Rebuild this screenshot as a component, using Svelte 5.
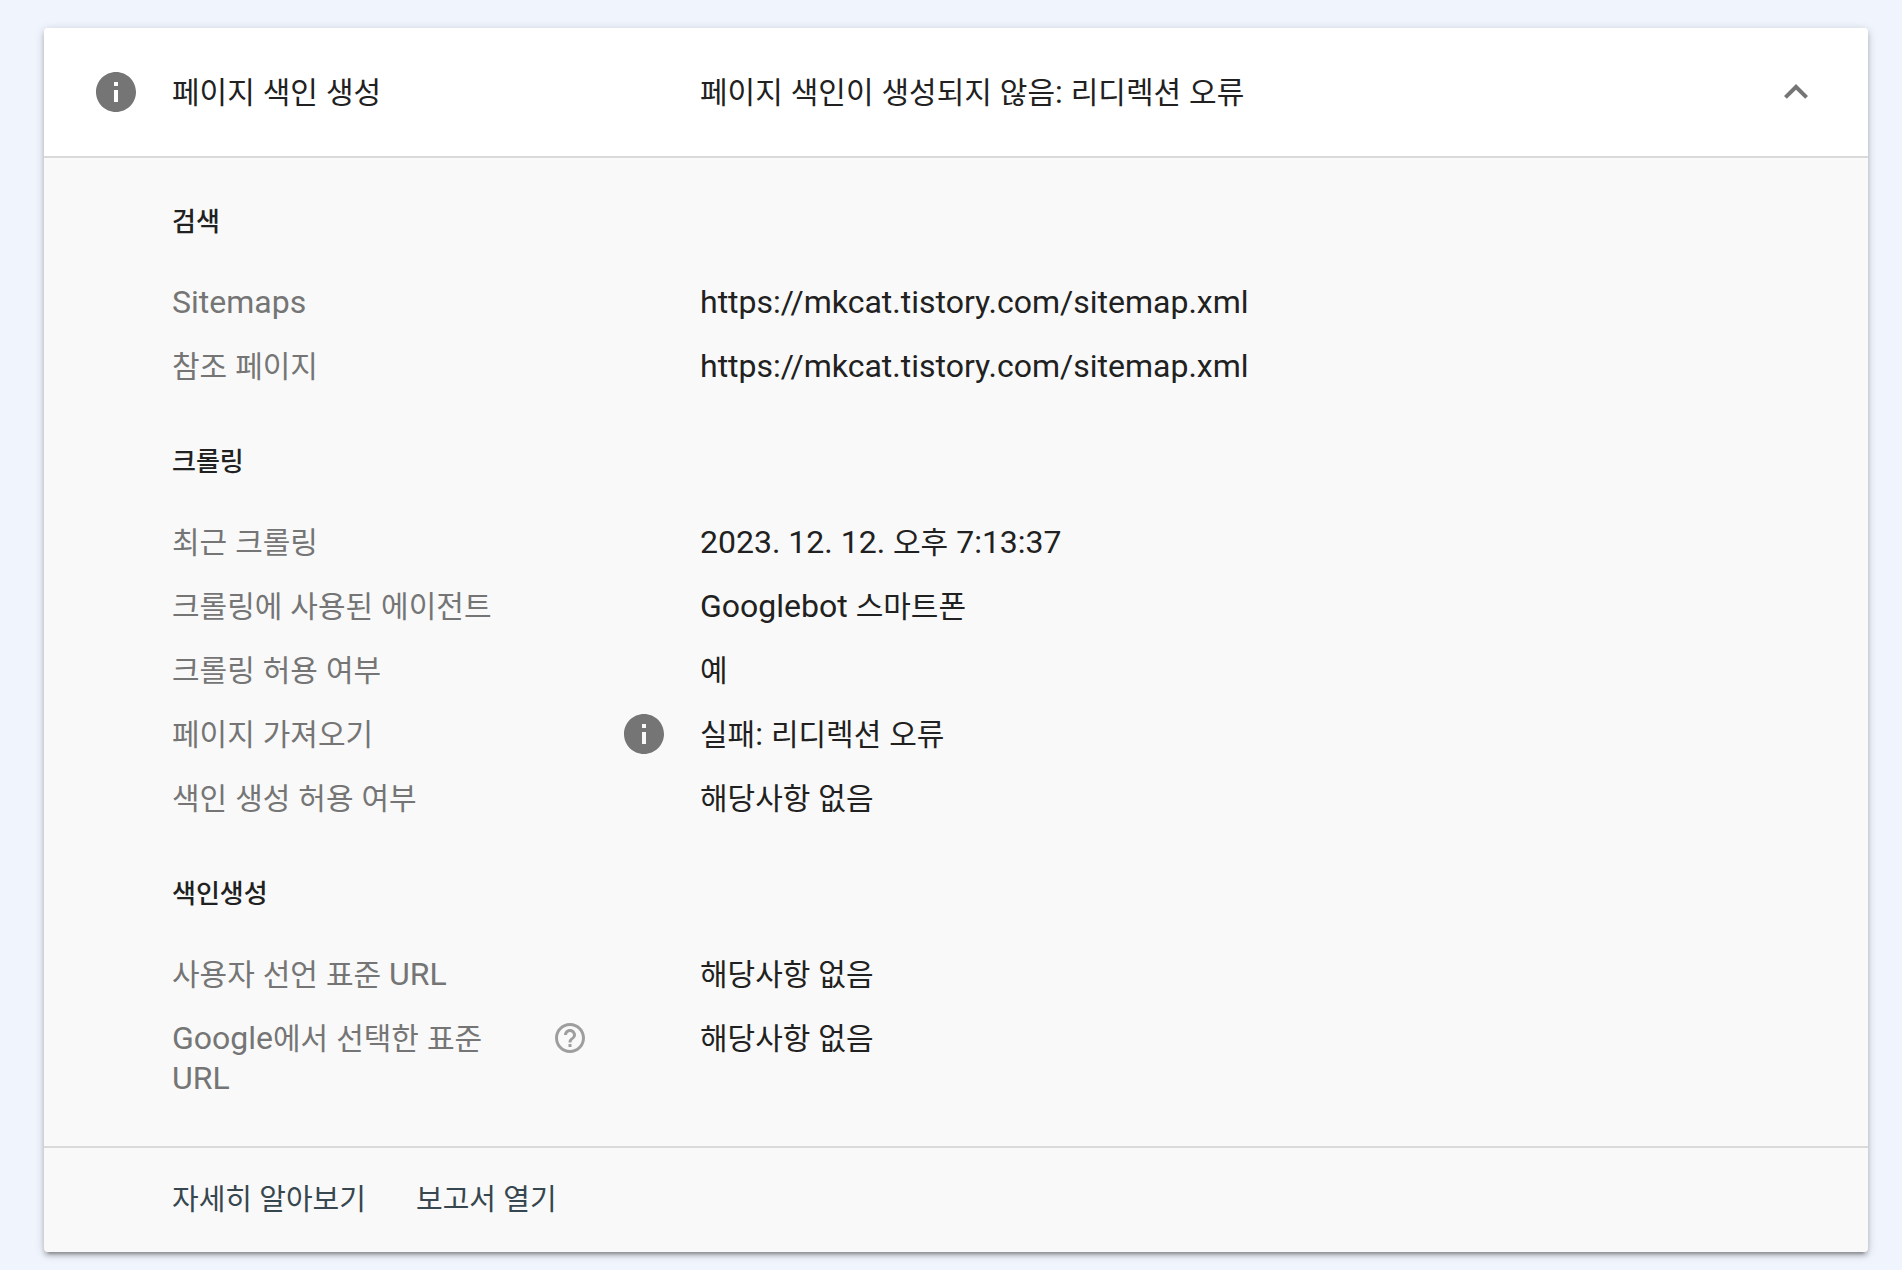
<script lang="ts">
  type Row = { label: string; value: string; help?: boolean; info?: boolean };
  type Section = { title: string; rows: Row[] };

  let open = $state(true);

  const sections: Section[] = [
    {
      title: '검색',
      rows: [
        { label: 'Sitemaps', value: 'https://mkcat.tistory.com/sitemap.xml' },
        { label: '참조 페이지', value: 'https://mkcat.tistory.com/sitemap.xml' }
      ]
    },
    {
      title: '크롤링',
      rows: [
        { label: '최근 크롤링', value: '2023. 12. 12. 오후 7:13:37' },
        { label: '크롤링에 사용된 에이전트', value: 'Googlebot 스마트폰' },
        { label: '크롤링 허용 여부', value: '예' },
        { label: '페이지 가져오기', value: '실패: 리디렉션 오류', info: true },
        { label: '색인 생성 허용 여부', value: '해당사항 없음' }
      ]
    },
    {
      title: '색인생성',
      rows: [
        { label: '사용자 선언 표준 URL', value: '해당사항 없음' },
        { label: 'Google에서 선택한 표준 URL', value: '해당사항 없음', help: true }
      ]
    }
  ];

  // Hangul runs are set a little smaller than Latin so both look the same size.
  const runs = (text: string) => text.split(/([가-힣]+)/).filter(Boolean);
  const isHangul = (run: string) => /[가-힣]/.test(run);
</script>

{#snippet mixed(text: string)}{#each runs(text) as run}{#if isHangul(run)}<span class="ko">{run}</span>{:else}{run}{/if}{/each}{/snippet}

{#snippet infoIcon()}
  <svg class="info" viewBox="0 0 24 24" aria-hidden="true">
    <path d="M12 2C6.48 2 2 6.48 2 12s4.48 10 10 10 10-4.48 10-10S17.52 2 12 2zm1 15h-2v-6h2v6zm0-8h-2V7h2v2z" />
  </svg>
{/snippet}

<main>
  <article class="card">
    <button class="head" aria-expanded={open} onclick={() => (open = !open)}>
      <span class="lead">{@render infoIcon()}</span>
      <span class="name">{@render mixed('페이지 색인 생성')}</span>
      <span class="status">{@render mixed('페이지 색인이 생성되지 않음: 리디렉션 오류')}</span>
      <svg class="chevron" class:closed={!open} viewBox="0 0 24 24" aria-hidden="true">
        <path d="M12 8l-6 6 1.41 1.41L12 10.83l4.59 4.58L18 14z" />
      </svg>
    </button>

    {#if open}
      <div class="body">
        {#each sections as section}
          <section>
            <h2>{section.title}</h2>
            <dl>
              {#each section.rows as row}
                <div class="row">
                  <dt>{@render mixed(row.label)}</dt>
                  <div class="help">
                    {#if row.help}
                      <button class="help-button" aria-label="도움말">
                        <svg viewBox="0 0 24 24" aria-hidden="true">
                          <path d="M11 18h2v-2h-2v2zm1-16C6.48 2 2 6.48 2 12s4.48 10 10 10 10-4.48 10-10S17.52 2 12 2zm0 18c-4.41 0-8-3.59-8-8s3.59-8 8-8 8 3.59 8 8-3.59 8-8 8zm0-14c-2.21 0-4 1.79-4 4h2c0-1.1.9-2 2-2s2 .9 2 2c0 2-3 1.75-3 5h2c0-2.25 3-2.5 3-5 0-2.21-1.79-4-4-4z" />
                        </svg>
                      </button>
                    {/if}
                  </div>
                  <div class="mark">
                    {#if row.info}{@render infoIcon()}{/if}
                  </div>
                  <dd>{@render mixed(row.value)}</dd>
                </div>
              {/each}
            </dl>
          </section>
        {/each}
      </div>
      <footer>
        <a href="#learn">자세히 알아보기</a>
        <a href="#report">보고서 열기</a>
      </footer>
    {/if}
  </article>
</main>

<style>
  :global(body) {
    margin: 0;
    background: #f0f4fc;
  }

  main {
    padding: 28px 34px 18px 44px;
    font-family: Roboto, 'Noto Sans CJK KR', sans-serif;
    font-size: 32px;
    line-height: 40px;
    color: #212121;
  }

  .card {
    background: #f9f9f9;
    border-radius: 4px;
    box-shadow:
      0 6px 2px -4px rgba(0, 0, 0, 0.2),
      0 4px 4px rgba(0, 0, 0, 0.14),
      0 2px 10px rgba(0, 0, 0, 0.2);
    overflow: hidden;
  }

  .ko {
    font-size: 30px;
    line-height: 1;
  }

  button {
    margin: 0;
    border: 0;
    padding: 0;
    background: none;
    font: inherit;
    color: inherit;
    text-align: left;
    cursor: pointer;
  }

  svg {
    display: block;
    fill: #757575;
  }

  .head {
    display: flex;
    align-items: center;
    box-sizing: border-box;
    width: 100%;
    height: 130px;
    padding: 0 48px;
    border-bottom: 2px solid #dadada;
    background: #fff;
  }

  .lead {
    width: 80px;
  }

  .info {
    width: 48px;
    height: 48px;
  }

  .name {
    width: 528px;
  }

  .status {
    flex: 1;
  }

  .chevron {
    width: 48px;
    height: 48px;
  }

  .closed {
    transform: rotate(180deg);
  }

  .body {
    padding: 40px 48px 48px 128px;
  }

  section + section {
    margin-top: 52px;
  }

  h2 {
    margin: 0 0 36px;
    font-size: 26px;
    font-weight: 500;
    line-height: 48px;
  }

  dl {
    display: flex;
    flex-direction: column;
    gap: 24px;
    margin: 0;
  }

  .row {
    display: flex;
    align-items: flex-start;
  }

  dt {
    width: 360px;
    color: #757575;
  }

  .help {
    display: flex;
    width: 88px;
    height: 40px;
    align-items: center;
    padding-left: 20px;
    box-sizing: border-box;
  }

  .help-button svg {
    width: 36px;
    height: 36px;
    fill: #9e9e9e;
  }

  .mark {
    display: flex;
    width: 80px;
    height: 40px;
    align-items: center;
  }

  dd {
    flex: 1;
    margin: 0;
  }

  footer {
    display: flex;
    gap: 50px;
    padding: 32px 128px;
    border-top: 2px solid #dadada;
    font-size: 29px;
  }

  a {
    color: #37474f;
    text-decoration: none;
  }
</style>
